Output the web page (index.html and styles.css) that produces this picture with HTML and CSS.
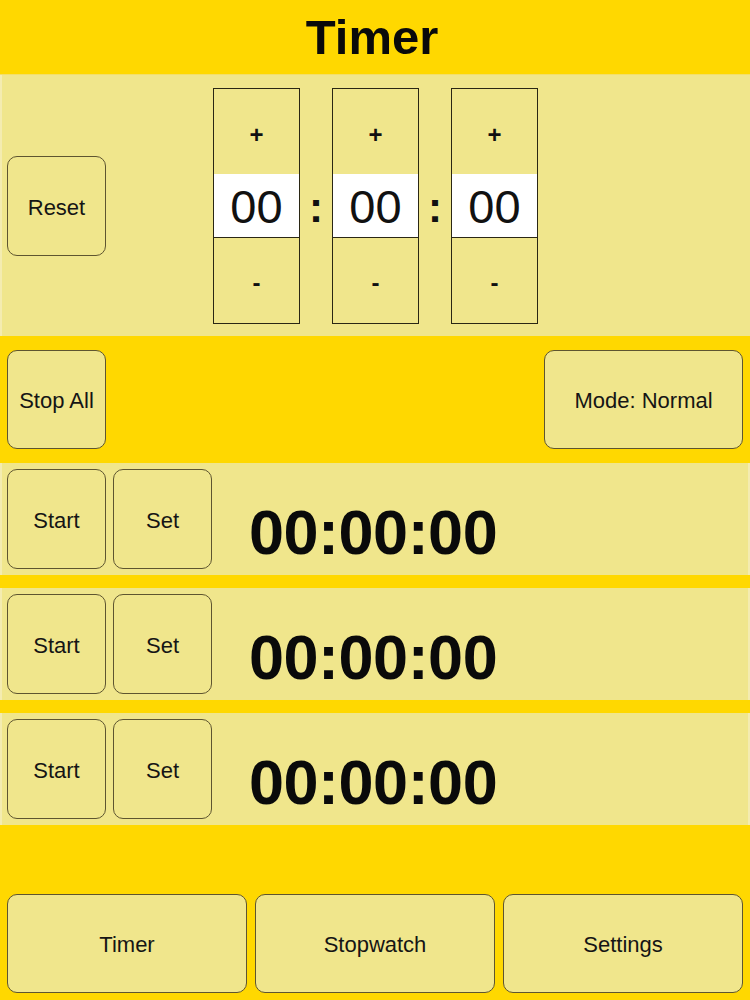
FILE: index.html
```html
<!DOCTYPE html>
<html>
<head>
<meta charset="utf-8">
<link rel="stylesheet" href="styles.css">
</head>
<body>
<header class="topbar"><h1 class="title">Timer</h1></header>

<section class="setpanel">
  <button class="btn btn-reset">Reset</button>
  <div class="spinners">
    <div class="spin">
      <button class="spin-btn spin-plus">+</button>
      <div class="spin-val">00</div>
      <button class="spin-btn spin-minus">-</button>
    </div>
    <div class="spin-sep">:</div>
    <div class="spin">
      <button class="spin-btn spin-plus">+</button>
      <div class="spin-val">00</div>
      <button class="spin-btn spin-minus">-</button>
    </div>
    <div class="spin-sep">:</div>
    <div class="spin">
      <button class="spin-btn spin-plus">+</button>
      <div class="spin-val">00</div>
      <button class="spin-btn spin-minus">-</button>
    </div>
  </div>
</section>

<section class="controls">
  <button class="btn btn-square">Stop All</button>
  <button class="btn btn-mode">Mode: Normal</button>
</section>

<section class="rows">
  <div class="trow">
    <button class="btn btn-square">Start</button>
    <button class="btn btn-square">Set</button>
    <div class="ttime">00:00:00</div>
  </div>
  <div class="trow">
    <button class="btn btn-square">Start</button>
    <button class="btn btn-square">Set</button>
    <div class="ttime">00:00:00</div>
  </div>
  <div class="trow">
    <button class="btn btn-square">Start</button>
    <button class="btn btn-square">Set</button>
    <div class="ttime">00:00:00</div>
  </div>
</section>

<nav class="tabs">
  <button class="btn btn-tab">Timer</button>
  <button class="btn btn-tab">Stopwatch</button>
  <button class="btn btn-tab">Settings</button>
</nav>
</body>
</html>
```

FILE: styles.css
```css
* { box-sizing: border-box; }

html, body {
  margin: 0;
  padding: 0;
  background: #ffd800;
  font-family: "Liberation Sans", Arial, Helvetica, sans-serif;
  color: #111;
  width: 750px;
  height: 1000px;
  overflow: hidden;
}

.topbar {
  height: 75px;
  display: flex;
  align-items: center;
  justify-content: center;
  border-bottom: 1px solid #f3df6a;
}

.title {
  margin: 0;
  font-size: 49px;
  font-weight: bold;
  line-height: 1;
  color: #0a0a0a;
  transform: translateX(-3px);
}

.btn {
  font-family: "Liberation Sans", Arial, Helvetica, sans-serif;
  font-size: 22px;
  color: #151515;
  background: #f0e68c;
  border: 1px solid #5e5530;
  border-radius: 10px;
  padding: 3px 0 0 0;
  margin: 0;
  display: flex;
  align-items: center;
  justify-content: center;
}

.setpanel {
  height: 261px;
  background: #f0e68c;
  border-left: 2px solid #f4ecb0;
  display: flex;
  align-items: center;
  padding-left: 5px;
}

.btn-reset {
  width: 99px;
  height: 100px;
  margin-top: 1px;
}

.spinners {
  display: flex;
  margin-left: 107px;
}

.spin {
  width: 87px;
  display: flex;
  flex-direction: column;
}

.spin-btn {
  height: 87px;
  background: #f0e68c;
  border: 1px solid #2a2714;
  font-family: "Liberation Sans", Arial, sans-serif;
  font-weight: bold;
  font-size: 24px;
  color: #111;
  padding: 0;
  display: flex;
  align-items: center;
  justify-content: center;
}

.spin-plus { padding-top: 8px; }
.spin-minus { padding-top: 6px; }

.spin-btn + .spin-val { margin-top: -1px; }
.spin-val + .spin-btn { margin-top: -1px; }

.spin-val {
  height: 64px;
  background: #ffffff;
  border-left: 1px solid #2a2714;
  border-right: 1px solid #2a2714;
  display: flex;
  align-items: center;
  justify-content: center;
  font-size: 47px;
  color: #111;
  line-height: 1;
  padding-top: 2px;
}

.spin-sep {
  width: 32px;
  display: flex;
  align-items: center;
  justify-content: center;
  font-size: 42px;
  font-weight: bold;
  color: #111;
  padding-top: 4px;
}

.controls {
  height: 127px;
  display: flex;
  justify-content: space-between;
  align-items: flex-start;
  padding: 14px 7px 0 7px;
}

.btn-square {
  width: 99px;
  height: 100px;
}

.controls .btn-square { height: 99px; }

.btn-mode {
  width: 199px;
  height: 99px;
}

.rows {
  display: flex;
  flex-direction: column;
  gap: 13px;
}

.trow {
  height: 112px;
  background: #f0e68c;
  border-left: 2px solid #f4ecb0;
  border-right: 2px solid #f4ecb0;
  display: flex;
  align-items: flex-start;
  padding: 6px 0 0 5px;
  gap: 7px;
}

.ttime {
  font-size: 63px;
  font-weight: bold;
  color: #0a0a0a;
  line-height: 1;
  margin-left: 30px;
  margin-top: 32px;
  letter-spacing: -0.5px;
}

.tabs {
  display: flex;
  gap: 8px;
  padding: 0 7px;
  margin-top: 69px;
}

.btn-tab {
  width: 240px;
  height: 99px;
}
```
